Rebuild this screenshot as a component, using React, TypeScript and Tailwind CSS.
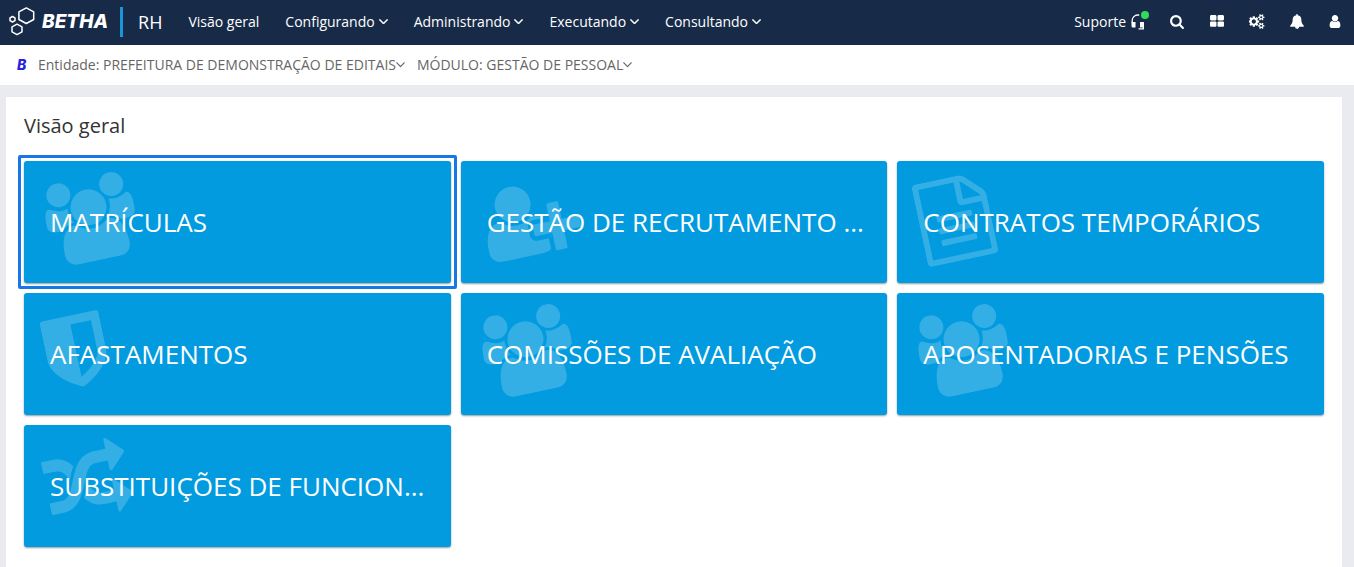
import React from 'react';

interface IconProps {
  className?: string;
}

interface Glyph {
  viewBox: string;
  width: string;
  path: string;
}

// Font Awesome 4 outlines, 1792 units to the em
const USERS: Glyph = {
  viewBox: '64 0 1920 1792',
  width: 'w-[90px]',
  path: 'M657 896q-162 5-265 128h-134q-82 0-138-40.5t-56-118.5q0-353 124-353 6 0 43.5 21t97.5 42.5 119 21.5q67 0 133-23-5 37-5 66 0 159 93 286zm1071 637q0 120-73 189.5t-194 69.5h-874q-121 0-194-69.5t-73-189.5q0-53 3.5-103.5t14-109 26.5-108.5 43-97.5 62-81 85.5-53.5 111.5-20q10 0 43 21.5t73 48 107 48 135 21.5 135-21.5 107-48 73-48 43-21.5q61 0 111.5 20t85.5 53.5 62 81 43 97.5 26.5 108.5 14 109 3.5 103.5zm-1024-1277q0 106-75 181t-181 75-181-75-75-181 75-181 181-75 181 75 75 181zm704 384q0 159-112.5 271.5t-271.5 112.5-271.5-112.5-112.5-271.5 112.5-271.5 271.5-112.5 271.5 112.5 112.5 271.5zm576 225q0 78-56 118.5t-138 40.5h-134q-103-123-265-128 93-127 93-286 0-29-5-66 66 23 133 23 59 0 119-21.5t97.5-42.5 43.5-21q124 0 124 353zm-128-609q0 106-75 181t-181 75-181-75-75-181 75-181 181-75 181 75 75 181z',
};

const USER_PLUS: Glyph = {
  viewBox: '0 0 2048 1792',
  width: 'w-[96px]',
  path: 'M704 896q-159 0-271.5-112.5t-112.5-271.5 112.5-271.5 271.5-112.5 271.5 112.5 112.5 271.5-112.5 271.5-271.5 112.5zm960 128h352q13 0 22.5 9.5t9.5 22.5v192q0 13-9.5 22.5t-22.5 9.5h-352v352q0 13-9.5 22.5t-22.5 9.5h-192q-13 0-22.5-9.5t-9.5-22.5v-352h-352q-13 0-22.5-9.5t-9.5-22.5v-192q0-13 9.5-22.5t22.5-9.5h352v-352q0-13 9.5-22.5t22.5-9.5h192q13 0 22.5 9.5t9.5 22.5v352zm-736 224q0 52 38 90t90 38h256v238q-68 50-171 50h-874q-121 0-194-69t-73-190q0-53 3.5-103.5t14-109 26.5-108.5 43-97.5 62-81 85.5-53.5 111.5-20q19 0 39 17 79 61 154.5 91.5t164.5 30.5 164.5-30.5 154.5-91.5q20-17 39-17 132 0 217 96h-223q-52 0-90 38t-38 90v192z',
};

const FILE_TEXT: Glyph = {
  viewBox: '128 0 1536 1792',
  width: 'w-[72px]',
  path: 'M1596 380q28 28 48 76t20 88v1152q0 40-28 68t-68 28h-1344q-40 0-68-28t-28-68v-1600q0-40 28-68t68-28h896q40 0 88 20t76 48zm-444-244v376h376q-10-29-22-41l-313-313q-12-12-41-22zm384 1528v-1024h-416q-40 0-68-28t-28-68v-416h-768v1536h1280zm-1024-864q0-14 9-23t23-9h704q14 0 23 9t9 23v64q0 14-9 23t-23 9h-704q-14 0-23-9t-9-23v-64zm736 224q14 0 23 9t9 23v64q0 14-9 23t-23 9h-704q-14 0-23-9t-9-23v-64q0-14 9-23t23-9h704zm0 256q14 0 23 9t9 23v64q0 14-9 23t-23 9h-704q-14 0-23-9t-9-23v-64q0-14 9-23t23-9h704z',
};

const SHIELD: Glyph = {
  viewBox: '256 0 1280 1792',
  width: 'w-[60px]',
  path: 'M1344 960v-640h-448v1137q119-63 213-137 235-184 235-360zm192-768v768q0 86-33.5 170.5t-83 150-118 127.5-126.5 103-121 77.5-89.5 49.5-42.5 20q-12 6-26 6t-26-6q-16-7-42.5-20t-89.5-49.5-121-77.5-126.5-103-118-127.5-83-150-33.5-170.5v-768q0-26 19-45t45-19h1152q26 0 45 19t19 45z',
};

const RANDOM: Glyph = {
  viewBox: '0 0 1792 1792',
  width: 'w-[84px]',
  path: 'M666 481q-60 92-137 273-22-45-37-72.5t-40.5-63.5-51-56.5-63-35-81.5-14.5h-224q-14 0-23-9t-9-23v-192q0-14 9-23t23-9h224q250 0 410 225zm1126 799q0 14-9 23l-320 320q-9 9-23 9-13 0-22.5-9.5t-9.5-22.5v-192q-32 0-85 .5t-81 1-73-1-71-5-64-10.5-63-18.5-58-28.5-59-40-55-53.5-56-69.5q59-93 136-273 22 45 37 72.5t40.5 63.5 51 56.5 63 35 81.5 14.5h256v-192q0-14 9-23t23-9q12 0 24 10l319 319q9 9 9 23zm0-896q0 14-9 23l-320 320q-9 9-23 9-13 0-22.5-9.5t-9.5-22.5v-192h-256q-48 0-87 15t-69 45-51 61.5-45 77.5q-32 62-78 171-29 66-49.5 111t-54 105-64 100-74 83-90 68.5-106.5 42-128 16.5h-224q-14 0-23-9t-9-23v-192q0-14 9-23t23-9h224q48 0 87-15t69-45 51-61.5 45-77.5q32-62 78-171 29-66 49.5-111t54-105 64-100 74-83 90-68.5 106.5-42 128-16.5h256v-192q0-14 9-23t23-9q12 0 24 10l319 319q9 9 9 23z',
};

const TOOLBAR = [
  {
    label: 'Pesquisar',
    viewBox: '0 0 1792 1792',
    width: 'w-4',
    path: 'M1216 832q0-185-131.5-316.5t-316.5-131.5-316.5 131.5-131.5 316.5 131.5 316.5 316.5 131.5 316.5-131.5 131.5-316.5zm512 832q0 52-38 90t-90 38q-54 0-90-38l-343-342q-179 124-399 124-143 0-273.5-55.5t-225-150-150-225-55.5-273.5 55.5-273.5 150-225 225-150 273.5-55.5 273.5 55.5 225 150 150 225 55.5 273.5q0 220-124 399l343 343q37 37 37 90z',
  },
  {
    label: 'Aplicativos',
    viewBox: '0 0 1792 1792',
    width: 'w-4',
    path: 'M832 1024v384q0 52-38 90t-90 38h-512q-52 0-90-38t-38-90v-384q0-52 38-90t90-38h512q52 0 90 38t38 90zm0-768v384q0 52-38 90t-90 38h-512q-52 0-90-38t-38-90v-384q0-52 38-90t90-38h512q52 0 90 38t38 90zm896 768v384q0 52-38 90t-90 38h-512q-52 0-90-38t-38-90v-384q0-52 38-90t90-38h512q52 0 90 38t38 90zm0-768v384q0 52-38 90t-90 38h-512q-52 0-90-38t-38-90v-384q0-52 38-90t90-38h512q52 0 90 38t38 90z',
  },
  {
    label: 'Ferramentas',
    viewBox: '0 0 1920 1792',
    width: 'w-4',
    path: 'M832 896q0-106-75-181t-181-75-181 75-75 181 75 181 181 75 181-75 75-181zm768 512q0-52-38-90t-90-38-90 38-38 90q0 53 37.5 90.5t90.5 37.5 90.5-37.5 37.5-90.5zm0-1024q0-52-38-90t-90-38-90 38-38 90q0 53 37.5 90.5t90.5 37.5 90.5-37.5 37.5-90.5zm-384 421v185q0 10-7 19.5t-16 10.5l-155 24q-11 35-32 76 34 48 90 115 7 11 7 20 0 12-7 19-23 30-82.5 89.5t-78.5 59.5q-11 0-21-7l-115-90q-37 19-77 31-11 108-23 155-7 24-30 24h-186q-11 0-20-7.5t-10-17.5l-23-153q-34-10-75-31l-118 89q-7 7-20 7-11 0-21-8-144-133-144-160 0-9 7-19 10-14 41-53t47-61q-23-44-35-82l-152-24q-10-1-17-9.5t-7-19.5v-185q0-10 7-19.5t16-10.5l155-24q11-35 32-76-34-48-90-115-7-11-7-20 0-12 7-20 22-30 82-89t79-59q11 0 21 7l115 90q34-18 77-32 11-108 23-154 7-24 30-24h186q11 0 20 7.5t10 17.5l23 153q34 10 75 31l118-89q8-7 20-7 11 0 21 8 144 133 144 160 0 8-7 19-12 16-42 54t-45 60q23 48 34 82l152 23q10 2 17 10.5t7 19.5zm640 533v140q0 16-149 31-12 27-30 52 51 113 51 138 0 4-4 7-122 71-124 71-8 0-46-47t-52-68q-20 2-30 2t-30-2q-14 21-52 68t-46 47q-2 0-124-71-4-3-4-7 0-25 51-138-18-25-30-52-149-15-149-31v-140q0-16 149-31 13-29 30-52-51-113-51-138 0-4 4-7 4-2 35-20t59-34 30-16q8 0 46 46.5t52 67.5q20-2 30-2t30 2q51-71 92-112l6-2q4 0 124 70 4 3 4 7 0 25-51 138 17 23 30 52 149 15 149 31zm0-1024v140q0 16-149 31-12 27-30 52 51 113 51 138 0 4-4 7-122 71-124 71-8 0-46-47t-52-68q-20 2-30 2t-30-2q-14 21-52 68t-46 47q-2 0-124-71-4-3-4-7 0-25 51-138-18-25-30-52-149-15-149-31v-140q0-16 149-31 13-29 30-52-51-113-51-138 0-4 4-7 4-2 35-20t59-34 30-16q8 0 46 46.5t52 67.5q20-2 30-2t30 2q51-71 92-112l6-2q4 0 124 70 4 3 4 7 0 25-51 138 17 23 30 52 149 15 149 31z',
  },
  {
    label: 'Notificações',
    viewBox: '0 0 1792 1792',
    width: 'w-4',
    path: 'M912 1696q0-16-16-16-59 0-101.5-42.5t-42.5-101.5q0-16-16-16t-16 16q0 73 51.5 124.5t124.5 51.5q16 0 16-16zm816-288q0 52-38 90t-90 38h-448q0 106-75 181t-181 75-181-75-75-181h-448q-52 0-90-38t-38-90q50-42 91-88t85-119.5 74.5-158.5 50-206 19.5-260q0-152 117-282.5t307-158.5q-8-19-8-39 0-40 28-68t68-28 68 28 28 68q0 20-8 39 190 28 307 158.5t117 282.5q0 139 19.5 260t50 206 74.5 158.5 85 119.5 91 88z',
  },
  {
    label: 'Usuário',
    viewBox: '256 0 1280 1792',
    width: 'w-3',
    path: 'M1536 1399q0 109-62.5 187t-150.5 78h-854q-88 0-150.5-78t-62.5-187q0-85 8.5-160.5t31.5-152 58.5-131 94-89 134.5-34.5q131 128 313 128t313-128q76 0 134.5 34.5t94 89 58.5 131 31.5 152 8.5 160.5zm-256-887q0 159-112.5 271.5t-271.5 112.5-271.5-112.5-112.5-271.5 112.5-271.5 271.5-112.5 271.5 112.5 112.5 271.5z',
  },
];

const MENUS = ['Configurando', 'Administrando', 'Executando', 'Consultando'];

const TILES = [
  { label: 'MATRÍCULAS', icon: USERS, selected: true },
  { label: 'GESTÃO DE RECRUTAMENTO ...', icon: USER_PLUS },
  { label: 'CONTRATOS TEMPORÁRIOS', icon: FILE_TEXT },
  { label: 'AFASTAMENTOS', icon: SHIELD },
  { label: 'COMISSÕES DE AVALIAÇÃO', icon: USERS },
  { label: 'APOSENTADORIAS E PENSÕES', icon: USERS },
  { label: 'SUBSTITUIÇÕES DE FUNCION...', icon: RANDOM },
];

const AngleDown: React.FC<IconProps> = ({ className }) => (
  <svg viewBox="384 640 1024 640" className={className} fill="currentColor" aria-hidden="true">
    <path d="M1395 736q0 13-10 23l-466 466q-10 10-23 10t-23-10l-466-466q-10-10-10-23t10-23l50-50q10-10 23-10t23 10l393 393 393-393q10-10 23-10t23 10l50 50q10 10 10 23z" />
  </svg>
);

const Hexagons: React.FC<IconProps> = ({ className }) => (
  <svg viewBox="0 0 28 30" className={className} fill="none" stroke="currentColor" strokeWidth="1.5" strokeLinejoin="round" aria-hidden="true">
    <path d="M17.300 .9l7.400 4v7.600l-7.400 4-7.400-4V4.900z" />
    <path d="M8 17.200l5 2.600v5L8 27.600l-5-2.800v-5z" />
    <path d="M3.500 9.500L6 10.800v2.800L3.500 15 1 13.600v-2.800z" />
  </svg>
);

const Headset: React.FC<IconProps> = ({ className }) => (
  <svg viewBox="0 0 14 16" className={className} fill="currentColor" aria-hidden="true">
    <path d="M1.200 9V6.500A5.500 5.500 0 0 1 6.700 1h1.500M12.300 9v5.800H7.500" fill="none" stroke="currentColor" strokeWidth="1.3" />
    <path d="M.5 8h4v5.500H2A1.500 1.500 0 0 1 .5 12zM9 8h4v5.500H9z" />
  </svg>
);

const Header: React.FC = () => (
  <header className="flex h-[45px] items-center bg-[#172b48] pb-0.5 text-white">
    <a href="#" className="flex items-center pl-[9px]" aria-label="Betha">
      <Hexagons className="mr-[5px] h-[30px] w-7" />
      <span className="font-[Inter] text-[19px] font-extrabold italic leading-5">BETHA</span>
    </a>
    <span className="ml-3 h-[30px] w-[3px] bg-[#1c94d8]" />
    <span className="ml-[15px] text-lg leading-6">RH</span>
    <nav className="ml-[26px] flex items-center gap-[26px] text-sm">
      <a href="#">Visão geral</a>
      {MENUS.map((menu) => (
        <button key={menu} type="button" className="flex items-center gap-1">
          {menu}
          <AngleDown className="w-[9px] stroke-current stroke-[50]" />
        </button>
      ))}
    </nav>
    <div className="ml-auto flex items-center text-sm">
      <button type="button" className="relative mr-6 flex items-center gap-[5px]">
        Suporte
        <Headset className="h-4 w-[14px]" />
        <span className="absolute -right-1 -top-px size-2 rounded-full bg-[#2edc5d]" />
      </button>
      <div className="flex items-center gap-6 pr-[13px]">
        {TOOLBAR.map((item) => (
          <button key={item.label} type="button" aria-label={item.label}>
            <svg viewBox={item.viewBox} className={`h-[15px] ${item.width}`} fill="currentColor" aria-hidden="true">
              <path d={item.path} />
            </svg>
          </button>
        ))}
      </div>
    </div>
  </header>
);

const ContextBar: React.FC = () => (
  <div className="flex h-10 items-center bg-white text-sm text-[#666]">
    <span className="ml-[17px] w-[21px] font-[Inter] font-extrabold italic text-[#2a22dc]">B</span>
    <button type="button" className="flex items-center">
      Entidade: PREFEITURA DE DEMONSTRAÇÃO DE EDITAIS
      <AngleDown className="w-[9px]" />
    </button>
    <button type="button" className="ml-3 flex items-center">
      MÓDULO: GESTÃO DE PESSOAL
      <AngleDown className="w-[9px]" />
    </button>
  </div>
);

export default function App() {
  return (
    <div className="flex min-h-screen flex-col bg-[#eaebf0] font-['Open_Sans',sans-serif]">
      <Header />
      <ContextBar />
      <main className="ml-1.5 mr-3 mt-3 flex-1 bg-white px-[18px] pb-5 pt-[15px]">
        <h1 className="mb-[21px] text-xl leading-7 text-[#333]">Visão geral</h1>
        <div className="grid grid-cols-3 gap-[10px]">
          {TILES.map(({ label, icon, selected }) => (
            <a
              key={label}
              href="#"
              className="relative flex h-[122px] min-w-0 items-center rounded-[3px] bg-[#029be0] px-[26px] shadow-[0_1px_2px_rgba(0,0,0,0.4)]"
            >
              {selected && <span className="absolute -inset-1.5 rounded-xs border-3 border-[#1877e6]" />}
              <svg
                viewBox={icon.viewBox}
                className={`absolute left-[22px] top-4 h-[84px] -rotate-12 text-white/20 ${icon.width}`}
                fill="currentColor"
                aria-hidden="true"
              >
                <path d={icon.path} />
              </svg>
              <span className="relative whitespace-nowrap text-[26px] leading-9 text-white">{label}</span>
            </a>
          ))}
        </div>
      </main>
    </div>
  );
}
